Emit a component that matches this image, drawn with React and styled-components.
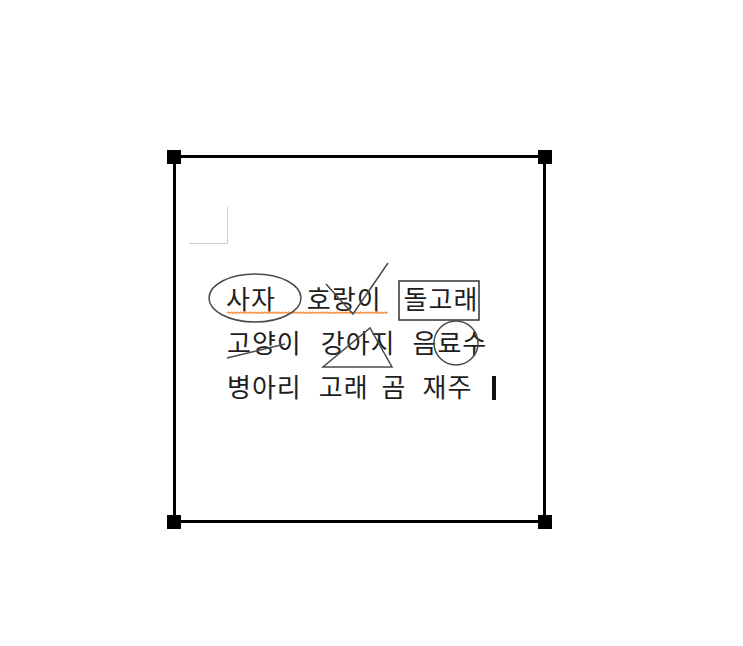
import React from 'react'
import styled, { createGlobalStyle } from 'styled-components'

const GlobalStyle = createGlobalStyle`
  html, body {
    margin: 0;
    padding: 0;
    background: #ffffff;
  }
  body {
    font-family: "Noto Sans CJK KR", "Noto Sans", sans-serif;
  }
`

const Page = styled.div`
  width: 743px;
  height: 646px;
  padding: 155px 0 0 173px;
  box-sizing: border-box;
`

const Frame = styled.div`
  position: relative;
  width: 373px;
  height: 368px;
  box-sizing: border-box;
  border: 3px solid #000;
`

const Handle = styled.div`
  position: absolute;
  width: 14px;
  height: 14px;
  background: #000;
  ${p => (p.$top ? 'top: -8px;' : 'bottom: -9px;')}
  ${p => (p.$left ? 'left: -9px;' : 'right: -9px;')}
`

const MarginMark = styled.div`
  width: 38px;
  height: 36px;
  margin: 49px 0 0 13px;
  border-right: 1px solid #d0d0d0;
  border-bottom: 1px solid #d0d0d0;
`

const TextBlock = styled.div`
  margin-top: 32px;
  padding-left: 50px;
  display: flex;
  flex-direction: column;
`

const Line = styled.div`
  display: flex;
  align-items: center;
  height: 44px;
  padding-left: ${p => p.$indent || 0}px;
`

const Word = styled.span`
  display: inline-block;
  margin-left: ${p => p.$gap || 0}px;
  font-size: 26px;
  letter-spacing: 1px;
  line-height: 44px;
  color: #1e1e1e;
  white-space: nowrap;
`

const Caret = styled.span`
  display: inline-block;
  width: 4px;
  height: 24px;
  margin: 4px 0 0 ${p => p.$gap}px;
  background: #111;
`

const Marks = styled.svg`
  position: absolute;
  top: -3px;
  left: -3px;
  pointer-events: none;
`

// wavy spell-check underline
const squiggle = (x0, x1, y) => {
  let d = `M${x0} ${y}`
  let up = true
  for (let x = x0 + 1.5; x <= x1; x += 1.5) {
    d += ` L${x} ${up ? y - 1 : y + 0.5}`
    up = !up
  }
  return d
}

const lines = [
  { indent: 0, words: [['사자', 0], ['호랑이', 31], ['돌고래', 22]] },
  { indent: 1, words: [['고양이', 0], ['강아지', 19], ['음료수', 17]] },
  { indent: 1, words: [['병아리', 0], ['고래', 17], ['곰', 13], ['재주', 16]] },
]

export default function App() {
  return (
    <>
      <GlobalStyle />
      <Page>
        <Frame>
          <MarginMark />
          <TextBlock>
            {lines.map((line, i) => (
              <Line key={i} $indent={line.indent}>
                {line.words.map(([w, gap]) => (
                  <Word key={w} $gap={gap}>{w}</Word>
                ))}
                {i === 2 && <Caret $gap={20} />}
              </Line>
            ))}
          </TextBlock>

          <Marks width="373" height="368" viewBox="173 155 373 368">
            <path d={squiggle(227, 388, 313)} fill="none" stroke="#ef8c3e" strokeWidth="1.2" />
            <g fill="none" stroke="#4a4a4a" strokeWidth="1.5">
              <ellipse cx="255" cy="298" rx="46" ry="24" />
              <polyline points="326,284 353,314 388,263" />
              <rect x="399" y="281" width="80" height="39" stroke="#333" />
              <circle cx="456" cy="343" r="22" />
              <line x1="227" y1="358" x2="285" y2="344" />
              <polygon points="323,367 392,367 370,328" />
            </g>
          </Marks>

          <Handle $top $left />
          <Handle $top />
          <Handle $left />
          <Handle />
        </Frame>
      </Page>
    </>
  )
}
